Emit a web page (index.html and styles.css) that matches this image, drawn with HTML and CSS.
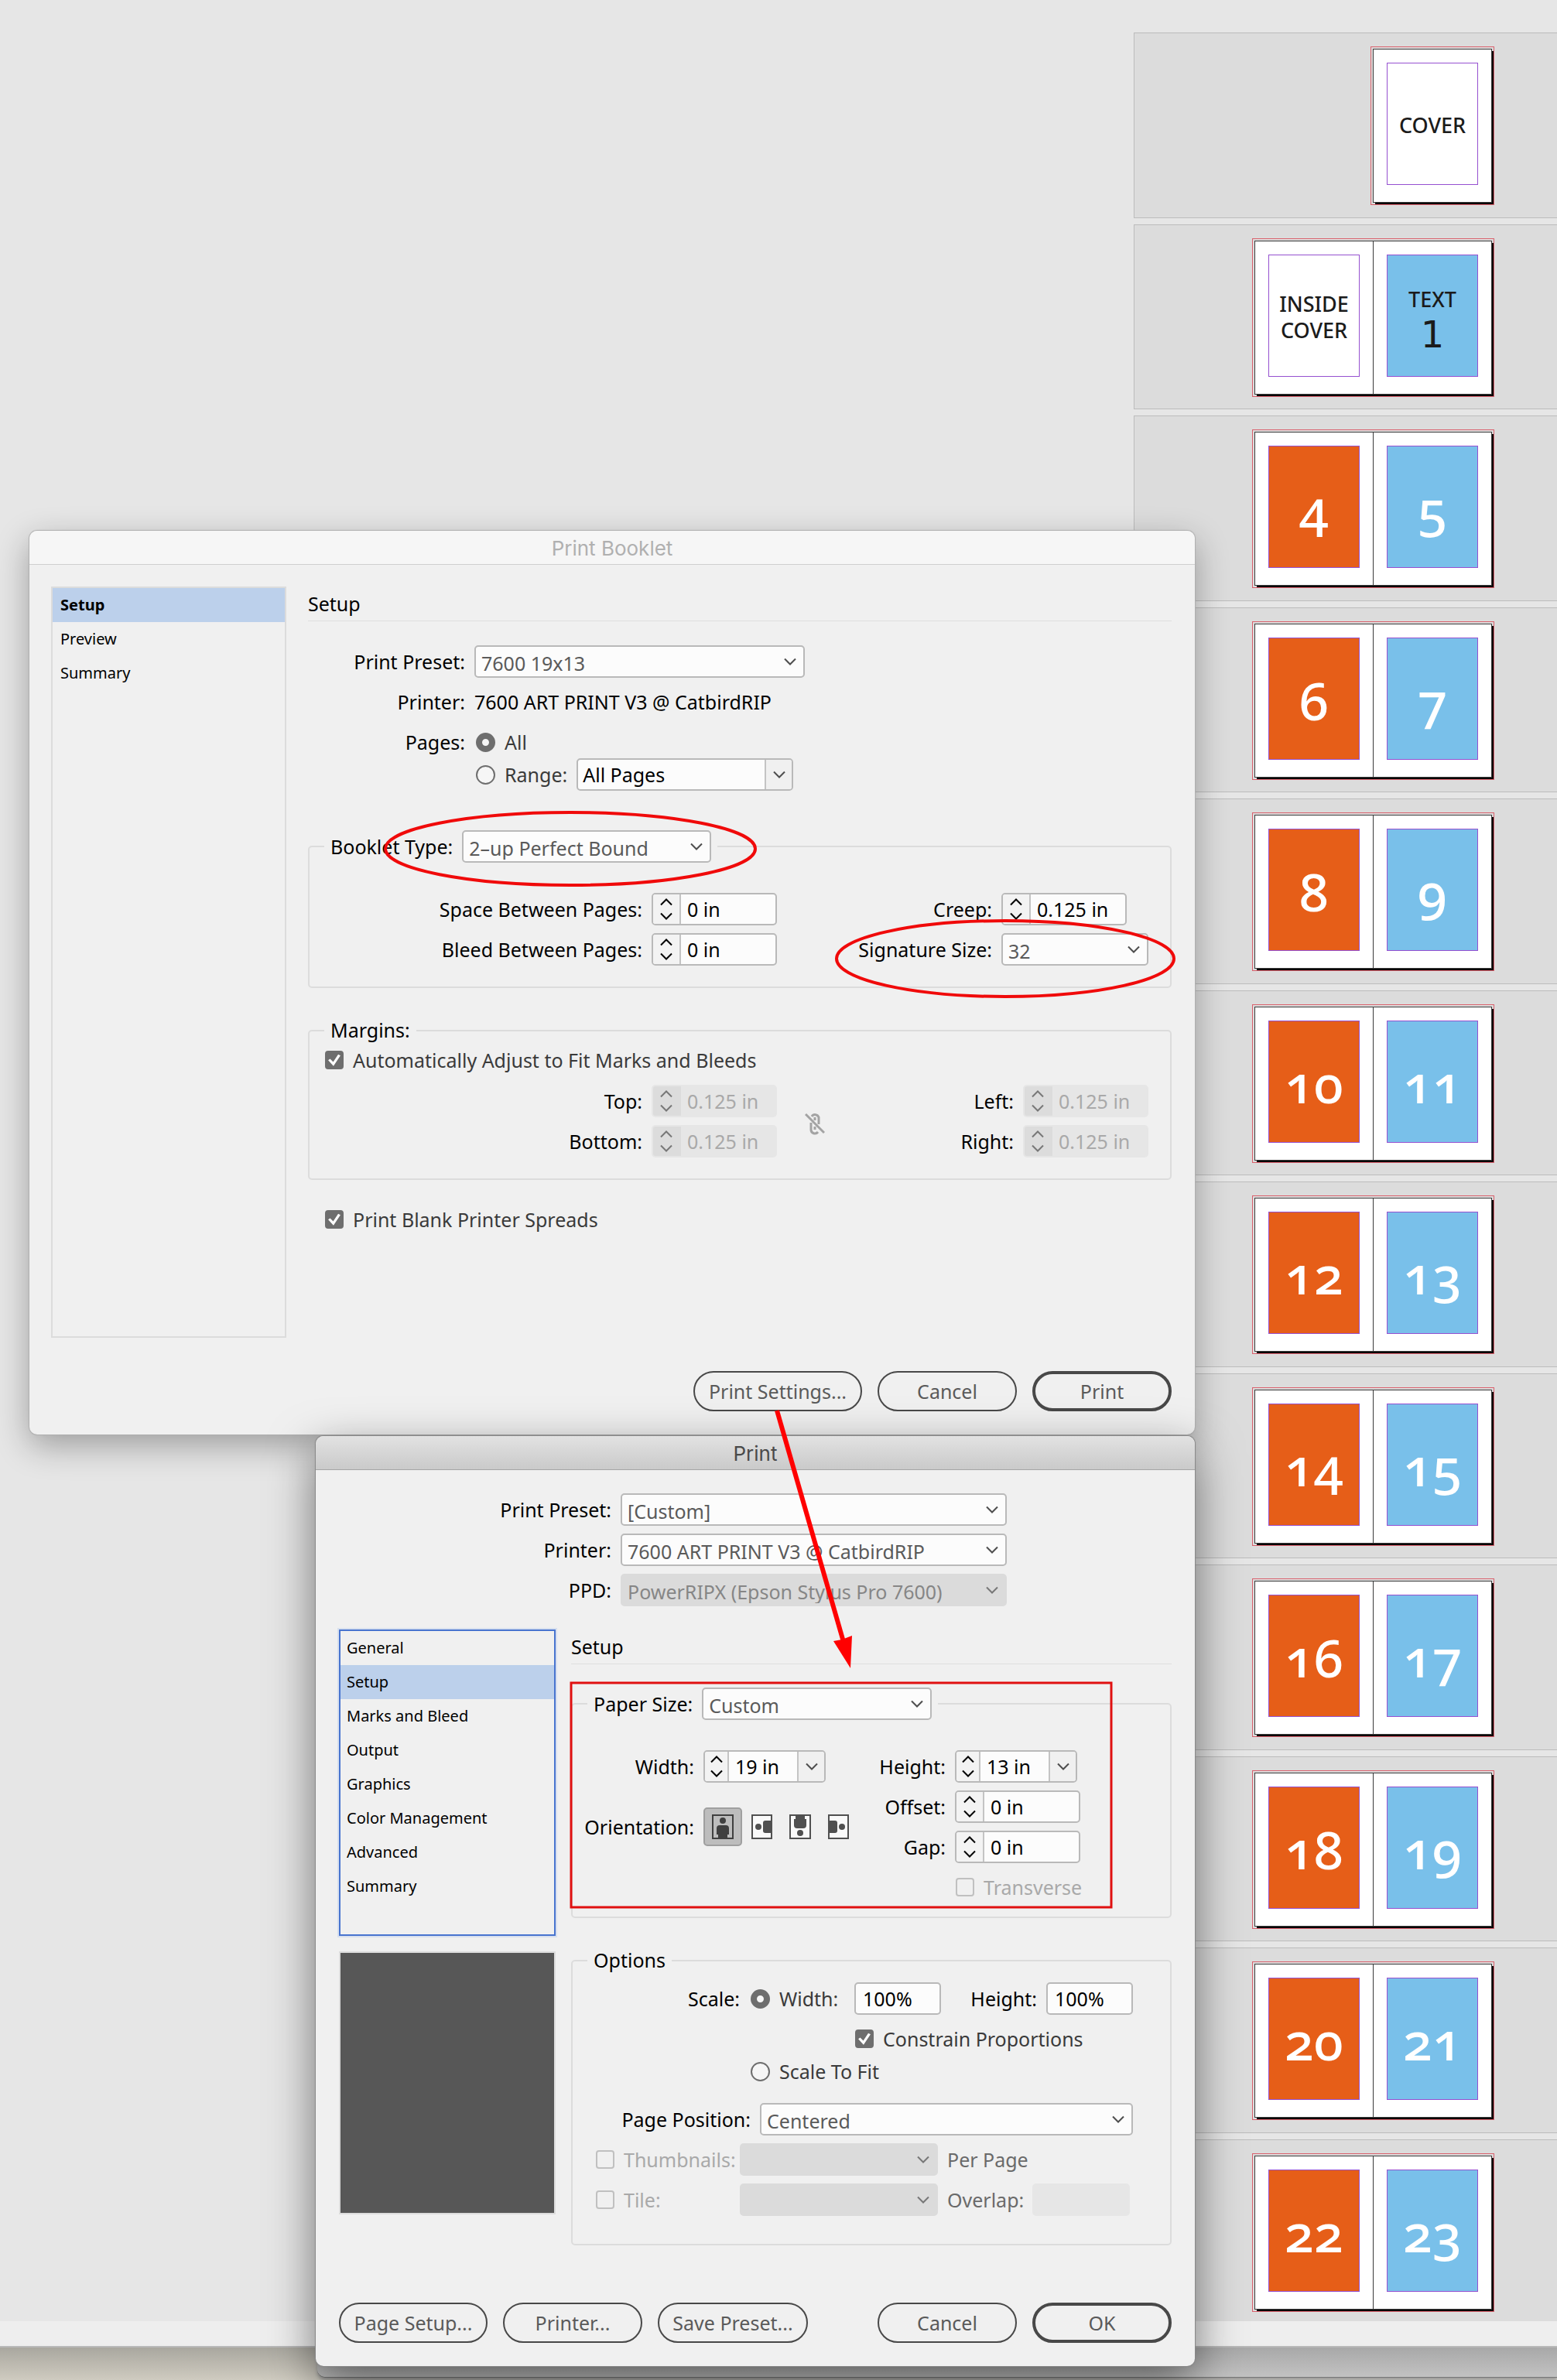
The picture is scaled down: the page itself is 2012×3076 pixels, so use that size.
FILE: index.html
```html
<!DOCTYPE html>
<html lang="en">
<head>
<meta charset="utf-8">
<title>Print Booklet</title>
<link rel="stylesheet" href="styles.css">
</head>
<body>
<svg class="sprite" aria-hidden="true">
  <symbol id="down" viewBox="0 0 18 12"><path d="M2 2.5 9 9.5 16 2.5" fill="none" stroke="currentColor" stroke-width="2"/></symbol>
  <symbol id="up" viewBox="0 0 18 12"><path d="M2 9.5 9 2.5 16 9.5" fill="none" stroke="currentColor" stroke-width="2"/></symbol>
</svg>
<div class="desktop">
  <main class="app">
    <div class="pasteboard" id="spreads"></div>
    <div class="scrollbar"></div>
  </main>
  <div class="backdrop"></div>

  <section class="window booklet" aria-label="Print Booklet">
    <header class="titlebar">Print Booklet</header>
    <div class="body">
      <div class="columns">
        <ul class="panes">
          <li class="current strong">Setup</li>
          <li>Preview</li>
          <li>Summary</li>
        </ul>
        <div class="content">
          <h2>Setup</h2>
          <div class="form top-form">
            <label for="b-preset">Print Preset:</label>
            <span class="select w427"><select id="b-preset"><option>7600 19x13</option></select><svg><use href="#down"/></svg></span>
            <span class="caption">Printer:</span>
            <span>7600 ART PRINT V3 @ CatbirdRIP</span>
            <span class="caption">Pages:</span>
            <label class="choice"><input type="radio" name="pages" checked>All</label>
          </div>
          <div class="range">
            <label class="choice"><input type="radio" name="pages">Range:</label>
            <span class="combo w280"><input type="text" value="All Pages" aria-label="Page range"><button type="button" aria-label="Choose range"><svg><use href="#down"/></svg></button></span>
          </div>

          <fieldset class="type-set">
            <legend><span class="legend-row"><label for="b-type">Booklet Type:</label><span class="select w322"><select id="b-type"><option>2–up Perfect Bound</option></select><svg><use href="#down"/></svg></span></span></legend>
            <div class="form four creep-cols">
              <label for="b-space">Space Between Pages:</label>
              <span class="stepper"><span class="steps"><button type="button" aria-label="More"><svg><use href="#up"/></svg></button><button type="button" aria-label="Less"><svg><use href="#down"/></svg></button></span><input id="b-space" type="text" value="0 in"></span>
              <label for="b-creep">Creep:</label>
              <span class="stepper"><span class="steps"><button type="button" aria-label="More"><svg><use href="#up"/></svg></button><button type="button" aria-label="Less"><svg><use href="#down"/></svg></button></span><input id="b-creep" type="text" value="0.125 in"></span>
              <label for="b-bleed">Bleed Between Pages:</label>
              <span class="stepper"><span class="steps"><button type="button" aria-label="More"><svg><use href="#up"/></svg></button><button type="button" aria-label="Less"><svg><use href="#down"/></svg></button></span><input id="b-bleed" type="text" value="0 in"></span>
              <label for="b-sig">Signature Size:</label>
              <span class="select"><select id="b-sig"><option>32</option></select><svg><use href="#down"/></svg></span>
            </div>
          </fieldset>

          <fieldset class="plain-set">
            <legend><span class="legend-text">Margins:</span></legend>
            <label class="choice"><input type="checkbox" checked>Automatically Adjust to Fit Marks and Bleeds</label>
            <div class="form four margin-cols">
              <label for="m-top">Top:</label>
              <span class="stepper off"><span class="steps"><button type="button" disabled aria-label="More"><svg><use href="#up"/></svg></button><button type="button" disabled aria-label="Less"><svg><use href="#down"/></svg></button></span><input id="m-top" type="text" value="0.125 in" disabled></span>
              <label for="m-left">Left:</label>
              <span class="stepper off"><span class="steps"><button type="button" disabled aria-label="More"><svg><use href="#up"/></svg></button><button type="button" disabled aria-label="Less"><svg><use href="#down"/></svg></button></span><input id="m-left" type="text" value="0.125 in" disabled></span>
              <label for="m-bottom">Bottom:</label>
              <span class="stepper off"><span class="steps"><button type="button" disabled aria-label="More"><svg><use href="#up"/></svg></button><button type="button" disabled aria-label="Less"><svg><use href="#down"/></svg></button></span><input id="m-bottom" type="text" value="0.125 in" disabled></span>
              <label for="m-right">Right:</label>
              <span class="stepper off"><span class="steps"><button type="button" disabled aria-label="More"><svg><use href="#up"/></svg></button><button type="button" disabled aria-label="Less"><svg><use href="#down"/></svg></button></span><input id="m-right" type="text" value="0.125 in" disabled></span>
              <svg class="unlink" viewBox="0 0 26 30"><g fill="none" stroke="#a3a3a3" stroke-width="3"><path d="M9 6A5 5 0 0 1 18 7V16M8 14V23A5 5 0 0 0 17 26M13 7V11M13 19V23"/><path d="M1 3 25 27"/></g></svg>
            </div>
          </fieldset>
          <label class="choice blank"><input type="checkbox" checked>Print Blank Printer Spreads</label>
        </div>
      </div>
      <footer class="actions booklet-actions">
        <button type="button" class="pill w218">Print Settings...</button>
        <button type="button" class="pill w180">Cancel</button>
        <button type="button" class="pill w180 primary">Print</button>
      </footer>
    </div>
  </section>

  <section class="window print" aria-label="Print">
    <header class="titlebar">Print</header>
    <div class="body">
      <div class="form presets">
        <label for="p-preset">Print Preset:</label>
        <span class="select"><select id="p-preset"><option>[Custom]</option></select><svg><use href="#down"/></svg></span>
        <label for="p-printer">Printer:</label>
        <span class="select"><select id="p-printer"><option>7600 ART PRINT V3 @ CatbirdRIP</option></select><svg><use href="#down"/></svg></span>
        <label for="p-ppd">PPD:</label>
        <span class="select off"><select id="p-ppd" disabled><option>PowerRIPX (Epson Stylus Pro 7600)</option></select><svg><use href="#down"/></svg></span>
      </div>
      <div class="columns">
        <div class="side">
          <ul class="panes focused">
            <li>General</li>
            <li class="current">Setup</li>
            <li>Marks and Bleed</li>
            <li>Output</li>
            <li>Graphics</li>
            <li>Color Management</li>
            <li>Advanced</li>
            <li>Summary</li>
          </ul>
          <div class="preview"></div>
        </div>
        <div class="content">
          <h2>Setup</h2>
          <fieldset class="paper-set">
            <legend><span class="legend-row"><label for="p-size">Paper Size:</label><span class="select w297"><select id="p-size"><option>Custom</option></select><svg><use href="#down"/></svg></span></span></legend>
            <div class="form four paper-cols">
              <label for="p-width">Width:</label>
              <span class="stepper combo w158"><span class="steps"><button type="button" aria-label="More"><svg><use href="#up"/></svg></button><button type="button" aria-label="Less"><svg><use href="#down"/></svg></button></span><input id="p-width" type="text" value="19 in"><button type="button" class="drop" aria-label="Choose width"><svg><use href="#down"/></svg></button></span>
              <label for="p-height">Height:</label>
              <span class="stepper combo w158"><span class="steps"><button type="button" aria-label="More"><svg><use href="#up"/></svg></button><button type="button" aria-label="Less"><svg><use href="#down"/></svg></button></span><input id="p-height" type="text" value="13 in"><button type="button" class="drop" aria-label="Choose height"><svg><use href="#down"/></svg></button></span>
              <span class="caption tall">Orientation:</span>
              <span class="orient tall">
                <button type="button" class="on" aria-label="Portrait"><svg viewBox="0 0 28 32"><rect x="1" y="1" width="26" height="30" fill="none" stroke="#404040" stroke-width="2"/><circle cx="14" cy="8" r="4"/><path d="M6 18a4 4 0 0 1 4-4h8a4 4 0 0 1 4 4v8h-2v5H8v-5H6z"/></svg></button>
                <button type="button" aria-label="Landscape"><svg viewBox="0 0 28 32"><path d="M27 8V1H2V31H27V24" fill="#fafafa" stroke="#505050" stroke-width="2"/><circle cx="10" cy="16" r="4"/><path d="M28 8H19a3 3 0 0 0-3 3v10a3 3 0 0 0 3 3h9z"/></svg></button>
                <button type="button" aria-label="Reverse portrait"><svg viewBox="0 0 28 32"><rect x="1" y="1" width="26" height="30" fill="#fafafa" stroke="#505050" stroke-width="2"/><circle cx="14" cy="24" r="4"/><path d="M8 1h12v5h2v8a4 4 0 0 1-4 4h-8a4 4 0 0 1-4-4V6h2z"/></svg></button>
                <button type="button" aria-label="Reverse landscape"><svg viewBox="0 0 28 32"><path d="M1 8V1H26V31H1V24" fill="#fafafa" stroke="#505050" stroke-width="2"/><circle cx="18" cy="16" r="4"/><path d="M0 8h9a3 3 0 0 1 3 3v10a3 3 0 0 1-3 3H0z"/></svg></button>
              </span>
              <label for="p-offset">Offset:</label>
              <span class="stepper"><span class="steps"><button type="button" aria-label="More"><svg><use href="#up"/></svg></button><button type="button" aria-label="Less"><svg><use href="#down"/></svg></button></span><input id="p-offset" type="text" value="0 in"></span>
              <label for="p-gap">Gap:</label>
              <span class="stepper"><span class="steps"><button type="button" aria-label="More"><svg><use href="#up"/></svg></button><button type="button" aria-label="Less"><svg><use href="#down"/></svg></button></span><input id="p-gap" type="text" value="0 in"></span>
              <label class="choice off last"><input type="checkbox" disabled>Transverse</label>
            </div>
          </fieldset>
          <fieldset class="plain-set options">
            <legend><span class="legend-text">Options</span></legend>
            <div class="form scale">
              <span class="caption">Scale:</span>
              <label class="choice"><input type="radio" name="scale" checked>Width:</label>
              <input class="field" type="text" value="100%" aria-label="Width scale">
              <label for="s-height">Height:</label>
              <input class="field" id="s-height" type="text" value="100%">
              <label class="choice constrain"><input type="checkbox" checked>Constrain Proportions</label>
            </div>
            <label class="choice fit"><input type="radio" name="scale">Scale To Fit</label>
            <div class="line position"><label for="o-pos">Page Position:</label><span class="select"><select id="o-pos"><option>Centered</option></select><svg><use href="#down"/></svg></span></div>
            <div class="line"><label class="choice off lead"><input type="checkbox" disabled>Thumbnails:</label><span class="select off w256"><select disabled aria-label="Thumbnails layout"><option></option></select><svg><use href="#down"/></svg></span><span class="dim">Per Page</span></div>
            <div class="line"><label class="choice off lead"><input type="checkbox" disabled>Tile:</label><span class="select off w256"><select disabled aria-label="Tile mode"><option></option></select><svg><use href="#down"/></svg></span><label class="dim overlap" for="o-lap">Overlap:</label><input class="field off" id="o-lap" type="text" disabled></div>
          </fieldset>
        </div>
      </div>
      <footer class="actions print-actions">
        <button type="button" class="pill w192">Page Setup...</button>
        <button type="button" class="pill w180">Printer...</button>
        <button type="button" class="pill w194">Save Preset...</button>
        <span class="spacer"></span>
        <button type="button" class="pill w180">Cancel</button>
        <button type="button" class="pill w180 primary">OK</button>
      </footer>
    </div>
  </section>

  <svg class="notes" width="1544" height="2480" viewBox="0 0 1544 2480" aria-hidden="true">
    <g fill="none" stroke="#f00a0a" stroke-width="4">
      <ellipse cx="737" cy="1097" rx="239" ry="47"/>
      <ellipse cx="1299" cy="1239" rx="218" ry="49"/>
      <rect x="738" y="2175" width="698" height="290" stroke="#e01010" stroke-width="3"/>
    </g>
    <path d="M1004 1823 1090 2122" stroke="#f00" stroke-width="6"/>
    <path d="M1077 2121 1088 2119 1101 2114 1099 2156z" fill="#f00"/>
  </svg>
</div>
<script src="spreads.js"></script>
</body>
</html>
```
FILE: spreads.js
```js
const page = (cls, inner) => `<div class="page"><div class="frame ${cls}">${inner}</div></div>`;
const spreads = [
  page('', '<span class="word">COVER</span>'),
  page('upper', '<span class="word">INSIDE<br>COVER</span>') +
    page('blue first', '<span class="word">TEXT</span><span class="one">1</span>')
];
for (let n = 4; n <= 22; n += 2) {
  spreads.push(page('orange', n) + page('blue', n + 1));
}
document.getElementById('spreads').innerHTML =
  spreads.map(s => `<div class="row"><div class="spread">${s}</div></div>`).join('');
```
FILE: styles.css
```css
* { box-sizing: border-box; }
body {
  margin: 0;
  font: 25px/42px "Noto Sans", "Open Sans", sans-serif;
  color: #000;
}
button, input, select { font: inherit; color: inherit; margin: 0; }
.sprite { display: none; }

.desktop {
  position: relative;
  min-height: 100vh;
  overflow: hidden;
  background: linear-gradient(#a9a79f, #cfcbc0) bottom / 100% 42px no-repeat #a9a79f;
}

/* document window */
.app { background: #e6e6e6; border-bottom: 2px solid #b9b9b9; }
.pasteboard { display: flex; flex-direction: column; gap: 8px; padding: 42px 0 0 1465px; }
.row {
  height: 240px;
  padding: 20px 84px 0 0;
  background: #dcdcdc;
  border: 1px solid #bcbcbc;
  border-right: 0;
  display: flex;
  justify-content: flex-end;
  align-items: flex-start;
}
.row:nth-child(even) { height: 239px; }
.row:last-child { height: 235px; border-bottom: 0; }
.scrollbar { height: 32px; background: #eee; }
.spread {
  display: flex;
  border: 1px solid #3a3a3a;
  background: #fff;
  outline: 1px solid #d9606c;
  outline-offset: 2px;
  box-shadow: 3px 3px 0 #000;
}
.page { padding: 17px 17px 22px; }
.page + .page { border-left: 1px solid #3a3a3a; }
.frame {
  width: 118px;
  height: 158px;
  border: 1px solid #9550d0;
  display: flex;
  flex-direction: column;
  align-items: center;
  justify-content: center;
  padding-top: 4px;
  font-size: 68px;
  line-height: 80px;
  font-weight: 500;
  font-variant-numeric: oldstyle-nums;
  color: #fff;
}
.frame.first { padding-top: 14px; }
.orange { background: #e65e18; }
.blue { background: #79c0ea; }
.word { font-size: 27px; line-height: 34px; text-align: center; color: #1b1b1b; }
.one { font-family: "DejaVu Sans", sans-serif; font-size: 48px; line-height: 56px; color: #1b1b1b; }

.backdrop {
  position: absolute;
  left: 410px;
  right: 0;
  bottom: 4px;
  height: 38px;
  border-bottom-left-radius: 10px;
  background: linear-gradient(#a8a8a8, #c2c2c2);
  box-shadow: 0 1px 0 #777, 0 4px 4px #999;
}

/* dialogs */
.window { position: absolute; background: #f0f0f0; border-radius: 10px; }
.booklet { left: 38px; top: 686px; width: 1506px; box-shadow: 0 0 1px 1px #b0b0b0, 0 14px 44px rgba(0,0,0,.32); }
.print { left: 408px; top: 1856px; width: 1136px; box-shadow: 0 0 1px 1px #888, 0 20px 60px rgba(0,0,0,.52); }
.titlebar {
  height: 44px;
  border-radius: 10px 10px 0 0;
  border-bottom: 1px solid #cfcfcf;
  background: #f6f6f6;
  font: 26px/45px Inter, Roboto, sans-serif;
  text-align: center;
  color: #b0b0b0;
}
.print .titlebar { background: linear-gradient(#e2e2e2, #cacaca); border-color: #a5a5a5; color: #4a4a4a; }
.body { padding: 28px 30px 30px 28px; }
.print .body { padding: 30px; }
.columns { display: grid; grid-template-columns: 304px 1fr; gap: 28px; }
.print .columns { grid-template-columns: 280px 1fr; gap: 20px; margin-top: 30px; }

.panes { list-style: none; margin: 0; padding: 0; border: 2px solid #dcdcdc; font-size: 20px; line-height: 44px; min-height: 971px; }
.panes li { padding-left: 10px; }
.panes .current { background: #bcd0eb; }
.panes .strong { font-weight: 700; }
.panes.focused { border-color: #4874cf; box-shadow: 0 0 0 2px #d8e0ee; min-height: 396px; line-height: 43px; }
.panes.focused li { padding-left: 8px; height: 44px; }
.preview { margin-top: 20px; height: 340px; background: #575757; border: 2px solid #dcdcdc; }

h2 { margin: 0 0 30px; font-size: 25px; font-weight: 400; line-height: 45px; height: 45px; border-bottom: 1px solid #dfdfdf; }
.booklet h2 { margin-bottom: 31px; }

.form { display: grid; gap: 10px 12px; }
.form > label, .caption { justify-self: end; white-space: nowrap; }
.form > .choice { justify-self: start; }
.top-form { grid-template-columns: 203px 1fr; }
.range { display: flex; gap: 12px; padding-left: 215px; }
.w427 { width: 427px; } .w280 { width: 280px; } .w322 { width: 322px; } .w297 { width: 297px; }
.w158 { width: 158px; } .w256 { width: 256px; } .w218 { width: 218px; } .w180 { width: 180px; }
.w192 { width: 192px; } .w194 { width: 194px; }

.choice { display: flex; align-items: center; gap: 12px; white-space: nowrap; color: #3a3a3a; height: 42px; }
.choice.off { color: #a9a9a9; }
input[type=radio], input[type=checkbox] { appearance: none; flex: none; }
input[type=radio] { width: 25px; height: 25px; border: 2px solid #6e6e6e; border-radius: 50%; margin-left: 2px; background: #f6f6f6; }
input[type=radio]:checked { border-width: 8px; border-color: #6e6e6e; }
input[type=checkbox] { width: 24px; height: 24px; border: 2px solid #c0c0c0; border-radius: 4px; margin-left: 1px; display: grid; place-items: center; }
input[type=checkbox]:checked { background: #6e6e6e; border-color: #6e6e6e; }
input[type=checkbox]:checked::before {
  content: "";
  width: 18px;
  height: 16px;
  background: #fff;
  clip-path: polygon(6% 52%, 20% 40%, 42% 66%, 78% 4%, 94% 14%, 44% 98%);
}

.select { display: grid; height: 42px; color: #4d4d4d; }
.select > * { grid-area: 1 / 1; }
.select select {
  appearance: none;
  width: 100%;
  height: 42px;
  padding: 0 36px 2px 7px;
  border: 2px solid #b9b9b9;
  border-radius: 5px;
  background: #fcfcfc;
  color: #5a5a5a;
  opacity: 1;
}
.select svg { justify-self: end; align-self: center; margin-right: 10px; pointer-events: none; }
.select.off select { background: #dbdbdb; border-color: #dbdbdb; color: #868686; }
.select.off svg { color: #777; }
svg:has(use) { width: 18px; height: 12px; display: block; }

.field, .stepper, .combo { height: 42px; border: 2px solid #b9b9b9; border-radius: 5px; background: #fcfcfc; }
.field { width: 112px; padding: 0 0 0 9px; }
.field.off { width: 126px; background: #e6e6e6; border-color: #e6e6e6; }
.stepper, .combo { display: flex; overflow: hidden; }
.stepper input, .combo input { flex: 1; min-width: 0; border: 0; padding: 0 0 0 8px; background: none; height: 38px; }
.combo input { padding-left: 6px; }
.stepper button, .combo button { border: 0; padding: 0; background: none; display: grid; place-items: center; }
.steps { display: flex; flex-direction: column; justify-content: space-between; padding: 4px 0; width: 36px; background: #f3f3f3; border-right: 2px solid #c4c4c4; }
.w158 .steps { width: 31px; }
.combo > button { width: 35px; background: #f0f0f0; border-left: 2px solid #c4c4c4; color: #4d4d4d; }
.combo.w158 input { padding-left: 8px; }
.stepper.off { border-color: #e6e6e6; background: #e6e6e6; color: #a9a9a9; }
.stepper.off .steps { background: #dcdcdc; border-color: #dcdcdc; color: #777; }
.stepper:not(.combo) { width: 162px; }

fieldset { margin: 0; border: 2px solid #dcdcdc; border-radius: 5px; padding: 0 28px 27px 19px; min-width: 0; }
legend { padding: 0 8px; }
.legend-row { display: flex; gap: 12px; height: 42px; }
.legend-text { display: block; height: 34px; line-height: 32px; }
.type-set { margin-top: 51px; }
.four { padding-top: 39px; }
.creep-cols { grid-template-columns: 1fr 162px 266px 190px; }
.plain-set { margin-top: 38px; }
.margin-cols { grid-template-columns: 1fr 162px 294px 162px; padding-top: 11px; }
.unlink { grid-area: 1 / 3 / 3 / 4; width: 26px; height: 30px; align-self: center; margin: 6px 0 0 24px; }
.margin-cols > :nth-child(1) { grid-area: 1 / 1; }
.margin-cols > :nth-child(2) { grid-area: 1 / 2; }
.margin-cols > :nth-child(3) { grid-area: 1 / 3; }
.margin-cols > :nth-child(4) { grid-area: 1 / 4; }
.margin-cols > :nth-child(5) { grid-area: 2 / 1; }
.margin-cols > :nth-child(6) { grid-area: 2 / 2; }
.margin-cols > :nth-child(7) { grid-area: 2 / 3; }
.margin-cols > :nth-child(8) { grid-area: 2 / 4; }
.blank { margin-top: 30px; padding-left: 21px; }

.presets { grid-template-columns: 352px 499px; }
.paper-set { padding-bottom: 17px; }
.paper-cols { grid-template-columns: 138px 200px 101px 162px; }
.tall { grid-row: 2 / span 2; align-self: center; }
.last { grid-column: 4; }
.orient { display: flex; }
.orient button { width: 50px; height: 50px; padding: 0; border: 2px solid transparent; border-radius: 5px; background: none; display: grid; place-items: center; }
.orient .on { background: #bdbdbd; border-color: #9f9f9f; }
.orient svg { width: 28px; height: 32px; fill: #505050; }
.orient .on svg { fill: #404040; }

.options { padding-bottom: 36px; }
.scale { grid-template-columns: 197px 124px 112px 112px 112px; padding-top: 11px; }
.constrain { grid-column: 3 / -1; }
.fit { padding-left: 209px; }
.line { display: flex; gap: 12px; margin-top: 10px; }
.position { margin-top: 20px; }
.position label { width: 211px; text-align: right; white-space: nowrap; }
.position .select { width: 482px; }
.lead { width: 185px; padding-left: 10px; }
.dim { color: #6a6a6a; white-space: nowrap; }
.overlap { width: 98px; text-align: right; }

.actions { display: flex; gap: 20px; }
.booklet-actions { justify-content: flex-end; margin-top: 43px; }
.print-actions { margin-top: 74px; }
.spacer { flex: 1; }
.pill { height: 52px; padding: 0; border: 2px solid #484848; border-radius: 26px; background: transparent; color: #5a5a5a; white-space: nowrap; }
.primary { border-width: 4px; }

.notes { position: absolute; left: 0; top: 0; pointer-events: none; }
```
